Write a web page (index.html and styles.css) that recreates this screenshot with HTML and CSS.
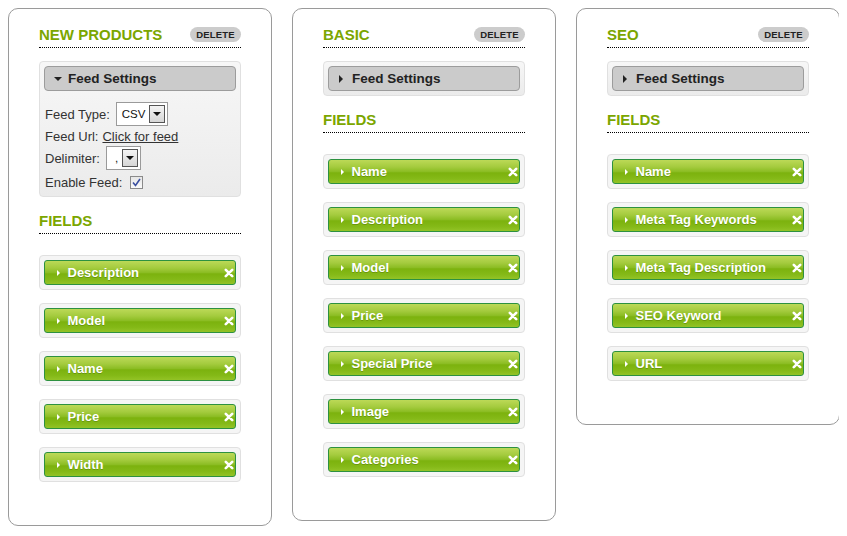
FILE: index.html
```html
<!DOCTYPE html>
<html>
<head>
<meta charset="utf-8">
<link rel="stylesheet" href="styles.css">
</head>
<body>
<div class="board">
  <div class="panel">
    <div class="head"><span class="title">NEW PRODUCTS</span><span class="del">DELETE</span></div>
    <div class="box settings">
      <div class="sbar"><span class="tri-down"></span>Feed Settings</div>
      <div class="sbody">
        <div class="row r1">Feed Type:<span class="sel w52"><span class="val">CSV</span><span class="btn"><span class="tri-sm"></span></span></span></div>
        <div class="row r2">Feed Url:<a class="lnk">Click for feed</a></div>
        <div class="row r3">Delimiter:<span class="sel w35"><span class="val">,</span><span class="btn"><span class="tri-sm"></span></span></span></div>
        <div class="row r4">Enable Feed:<span class="chk"><svg width="9" height="9" viewBox="0 0 9 9"><path d="M1 4.5 L3.5 7.5 L8 1" fill="none" stroke="#3a4fa0" stroke-width="1.6"/></svg></span></div>
      </div>
    </div>
    <div class="head fields"><span class="title">FIELDS</span></div>
    <div class="list">
      <div class="box item"><div class="gbtn"><span class="tri-w"></span><span class="lbl">Description</span><svg class="x" width="10" height="10" viewBox="0 0 10 10"><path d="M1.8 1.8 L8.2 8.2 M8.2 1.8 L1.8 8.2"/></svg></div></div>
      <div class="box item"><div class="gbtn"><span class="tri-w"></span><span class="lbl">Model</span><svg class="x" width="10" height="10" viewBox="0 0 10 10"><path d="M1.8 1.8 L8.2 8.2 M8.2 1.8 L1.8 8.2"/></svg></div></div>
      <div class="box item"><div class="gbtn"><span class="tri-w"></span><span class="lbl">Name</span><svg class="x" width="10" height="10" viewBox="0 0 10 10"><path d="M1.8 1.8 L8.2 8.2 M8.2 1.8 L1.8 8.2"/></svg></div></div>
      <div class="box item"><div class="gbtn"><span class="tri-w"></span><span class="lbl">Price</span><svg class="x" width="10" height="10" viewBox="0 0 10 10"><path d="M1.8 1.8 L8.2 8.2 M8.2 1.8 L1.8 8.2"/></svg></div></div>
      <div class="box item"><div class="gbtn"><span class="tri-w"></span><span class="lbl">Width</span><svg class="x" width="10" height="10" viewBox="0 0 10 10"><path d="M1.8 1.8 L8.2 8.2 M8.2 1.8 L1.8 8.2"/></svg></div></div>
    </div>
  </div>

  <div class="panel">
    <div class="head"><span class="title">BASIC</span><span class="del">DELETE</span></div>
    <div class="box settings">
      <div class="sbar"><span class="tri-right"></span>Feed Settings</div>
    </div>
    <div class="head fields"><span class="title">FIELDS</span></div>
    <div class="list">
      <div class="box item"><div class="gbtn"><span class="tri-w"></span><span class="lbl">Name</span><svg class="x" width="10" height="10" viewBox="0 0 10 10"><path d="M1.8 1.8 L8.2 8.2 M8.2 1.8 L1.8 8.2"/></svg></div></div>
      <div class="box item"><div class="gbtn"><span class="tri-w"></span><span class="lbl">Description</span><svg class="x" width="10" height="10" viewBox="0 0 10 10"><path d="M1.8 1.8 L8.2 8.2 M8.2 1.8 L1.8 8.2"/></svg></div></div>
      <div class="box item"><div class="gbtn"><span class="tri-w"></span><span class="lbl">Model</span><svg class="x" width="10" height="10" viewBox="0 0 10 10"><path d="M1.8 1.8 L8.2 8.2 M8.2 1.8 L1.8 8.2"/></svg></div></div>
      <div class="box item"><div class="gbtn"><span class="tri-w"></span><span class="lbl">Price</span><svg class="x" width="10" height="10" viewBox="0 0 10 10"><path d="M1.8 1.8 L8.2 8.2 M8.2 1.8 L1.8 8.2"/></svg></div></div>
      <div class="box item"><div class="gbtn"><span class="tri-w"></span><span class="lbl">Special Price</span><svg class="x" width="10" height="10" viewBox="0 0 10 10"><path d="M1.8 1.8 L8.2 8.2 M8.2 1.8 L1.8 8.2"/></svg></div></div>
      <div class="box item"><div class="gbtn"><span class="tri-w"></span><span class="lbl">Image</span><svg class="x" width="10" height="10" viewBox="0 0 10 10"><path d="M1.8 1.8 L8.2 8.2 M8.2 1.8 L1.8 8.2"/></svg></div></div>
      <div class="box item"><div class="gbtn"><span class="tri-w"></span><span class="lbl">Categories</span><svg class="x" width="10" height="10" viewBox="0 0 10 10"><path d="M1.8 1.8 L8.2 8.2 M8.2 1.8 L1.8 8.2"/></svg></div></div>
    </div>
  </div>

  <div class="panel">
    <div class="head"><span class="title">SEO</span><span class="del">DELETE</span></div>
    <div class="box settings">
      <div class="sbar"><span class="tri-right"></span>Feed Settings</div>
    </div>
    <div class="head fields"><span class="title">FIELDS</span></div>
    <div class="list">
      <div class="box item"><div class="gbtn"><span class="tri-w"></span><span class="lbl">Name</span><svg class="x" width="10" height="10" viewBox="0 0 10 10"><path d="M1.8 1.8 L8.2 8.2 M8.2 1.8 L1.8 8.2"/></svg></div></div>
      <div class="box item"><div class="gbtn"><span class="tri-w"></span><span class="lbl">Meta Tag Keywords</span><svg class="x" width="10" height="10" viewBox="0 0 10 10"><path d="M1.8 1.8 L8.2 8.2 M8.2 1.8 L1.8 8.2"/></svg></div></div>
      <div class="box item"><div class="gbtn"><span class="tri-w"></span><span class="lbl">Meta Tag Description</span><svg class="x" width="10" height="10" viewBox="0 0 10 10"><path d="M1.8 1.8 L8.2 8.2 M8.2 1.8 L1.8 8.2"/></svg></div></div>
      <div class="box item"><div class="gbtn"><span class="tri-w"></span><span class="lbl">SEO Keyword</span><svg class="x" width="10" height="10" viewBox="0 0 10 10"><path d="M1.8 1.8 L8.2 8.2 M8.2 1.8 L1.8 8.2"/></svg></div></div>
      <div class="box item"><div class="gbtn"><span class="tri-w"></span><span class="lbl">URL</span><svg class="x" width="10" height="10" viewBox="0 0 10 10"><path d="M1.8 1.8 L8.2 8.2 M8.2 1.8 L1.8 8.2"/></svg></div></div>
    </div>
  </div>
</div>
</body>
</html>
```

FILE: styles.css
```css
* { box-sizing: border-box; }
body {
  margin: 8px;
  background: #fff;
  font-family: "Liberation Sans", Arial, sans-serif;
  color: #333;
}
.board {
  display: flex;
  align-items: flex-start;
  gap: 20px;
}
.panel {
  flex: 0 0 264px;
  width: 264px;
  border: 1px solid #9a9a9a;
  border-radius: 10px;
  padding: 15px 30px 43px 30px;
  background: #fff;
}
.head {
  display: flex;
  align-items: center;
  justify-content: space-between;
  height: 20px;
  border-bottom: 1px dotted #000;
  padding-bottom: 3px;
  box-sizing: content-box;
}
.head .title {
  font-size: 15px;
  font-weight: bold;
  color: #7ba600;
  line-height: 20px;
  padding-top: 2px;
}
.del {
  display: inline-block;
  background: #cccccc;
  border-radius: 8px;
  font-size: 9.5px;
  font-weight: bold;
  color: #222;
  height: 15px;
  line-height: 15px;
  letter-spacing: 0.2px;
  width: 51px;
  text-align: center;
  margin-top: 1px;
}
.fields { margin-top: 13px; }
.box {
  border: 1px solid #e0e0e0;
  border-radius: 4px;
  padding: 4px;
}
.settings {
  margin-top: 13px;
  background: linear-gradient(#f7f7f7, #ebebeb);
}
.sbar {
  height: 25px;
  background: #cbcbcb;
  border: 1px solid #9c9c9c;
  border-radius: 4px;
  font-size: 13.5px;
  font-weight: bold;
  color: #222;
  display: flex;
  align-items: center;
  padding-left: 10px;
}
.tri-down {
  width: 0; height: 0;
  border-left: 4px solid transparent;
  border-right: 4px solid transparent;
  border-top: 4px solid #222;
  margin-left: -1px;
  margin-right: 6px;
}
.tri-right {
  width: 0; height: 0;
  border-top: 4px solid transparent;
  border-bottom: 4px solid transparent;
  border-left: 4px solid #222;
  margin-right: 9px;
}
.sbody {
  padding-left: 1px;
  font-size: 13px;
  color: #333;
}
.row {
  display: flex;
  align-items: center;
}
.r1 { margin-top: 11px; height: 24px; }
.r2 { height: 20px; }
.r3 { height: 24px; }
.r4 { height: 20px; margin-top: 2px; }
.lnk {
  color: #333;
  text-decoration: underline;
  margin-left: 4px;
}
.sel {
  display: inline-flex;
  align-items: center;
  height: 24px;
  border: 1px solid #9a9a9a;
  background: #fff;
  margin-left: 6px;
  padding: 2px;
}
.w52 { width: 52px; }
.w35 { width: 35px; }
.sel .val {
  flex: 1;
  padding-left: 3px;
  color: #111;
  font-size: 11.5px;
}
.w35 .val { padding-left: 6px; }
.sel .btn {
  width: 16px;
  height: 18px;
  border: 1px solid #555;
  background: linear-gradient(#f4f4f4, #d6d6d6);
  display: flex;
  align-items: center;
  justify-content: center;
}
.tri-sm {
  width: 0; height: 0;
  border-left: 4px solid transparent;
  border-right: 4px solid transparent;
  border-top: 4px solid #111;
}
.chk {
  display: inline-flex;
  align-items: center;
  justify-content: center;
  width: 13px;
  height: 13px;
  border: 1px solid #8a8a8a;
  background: linear-gradient(#e6e6e6, #fafafa);
  margin-left: 8px;
}
.list { margin-top: 21px; }
.item {
  background: #f5f5f5;
  margin-top: 13px;
}
.item:first-child { margin-top: 0; }
.gbtn {
  height: 25px;
  border: 1px solid #2d9140;
  border-radius: 3px;
  background: linear-gradient(#bcd957 0%, #a4cb3e 30%, #8cbd24 50%, #7cb20e 56%, #84b917 80%, #93c326 100%);
  display: flex;
  align-items: center;
  padding-left: 12px;
  padding-right: 1px;
  color: #fff;
  font-size: 13px;
  font-weight: bold;
  text-shadow: 0 1px 0 rgba(60, 90, 0, 0.35);
}
.tri-w {
  width: 0; height: 0;
  border-top: 3.5px solid transparent;
  border-bottom: 3.5px solid transparent;
  border-left: 3.5px solid #fff;
  margin-right: 7.5px;
}
.lbl { flex: 1; }
.x {
  display: block;
}
.x path {
  stroke: #fff;
  stroke-width: 2.6;
  stroke-linecap: round;
  fill: none;
}
```
